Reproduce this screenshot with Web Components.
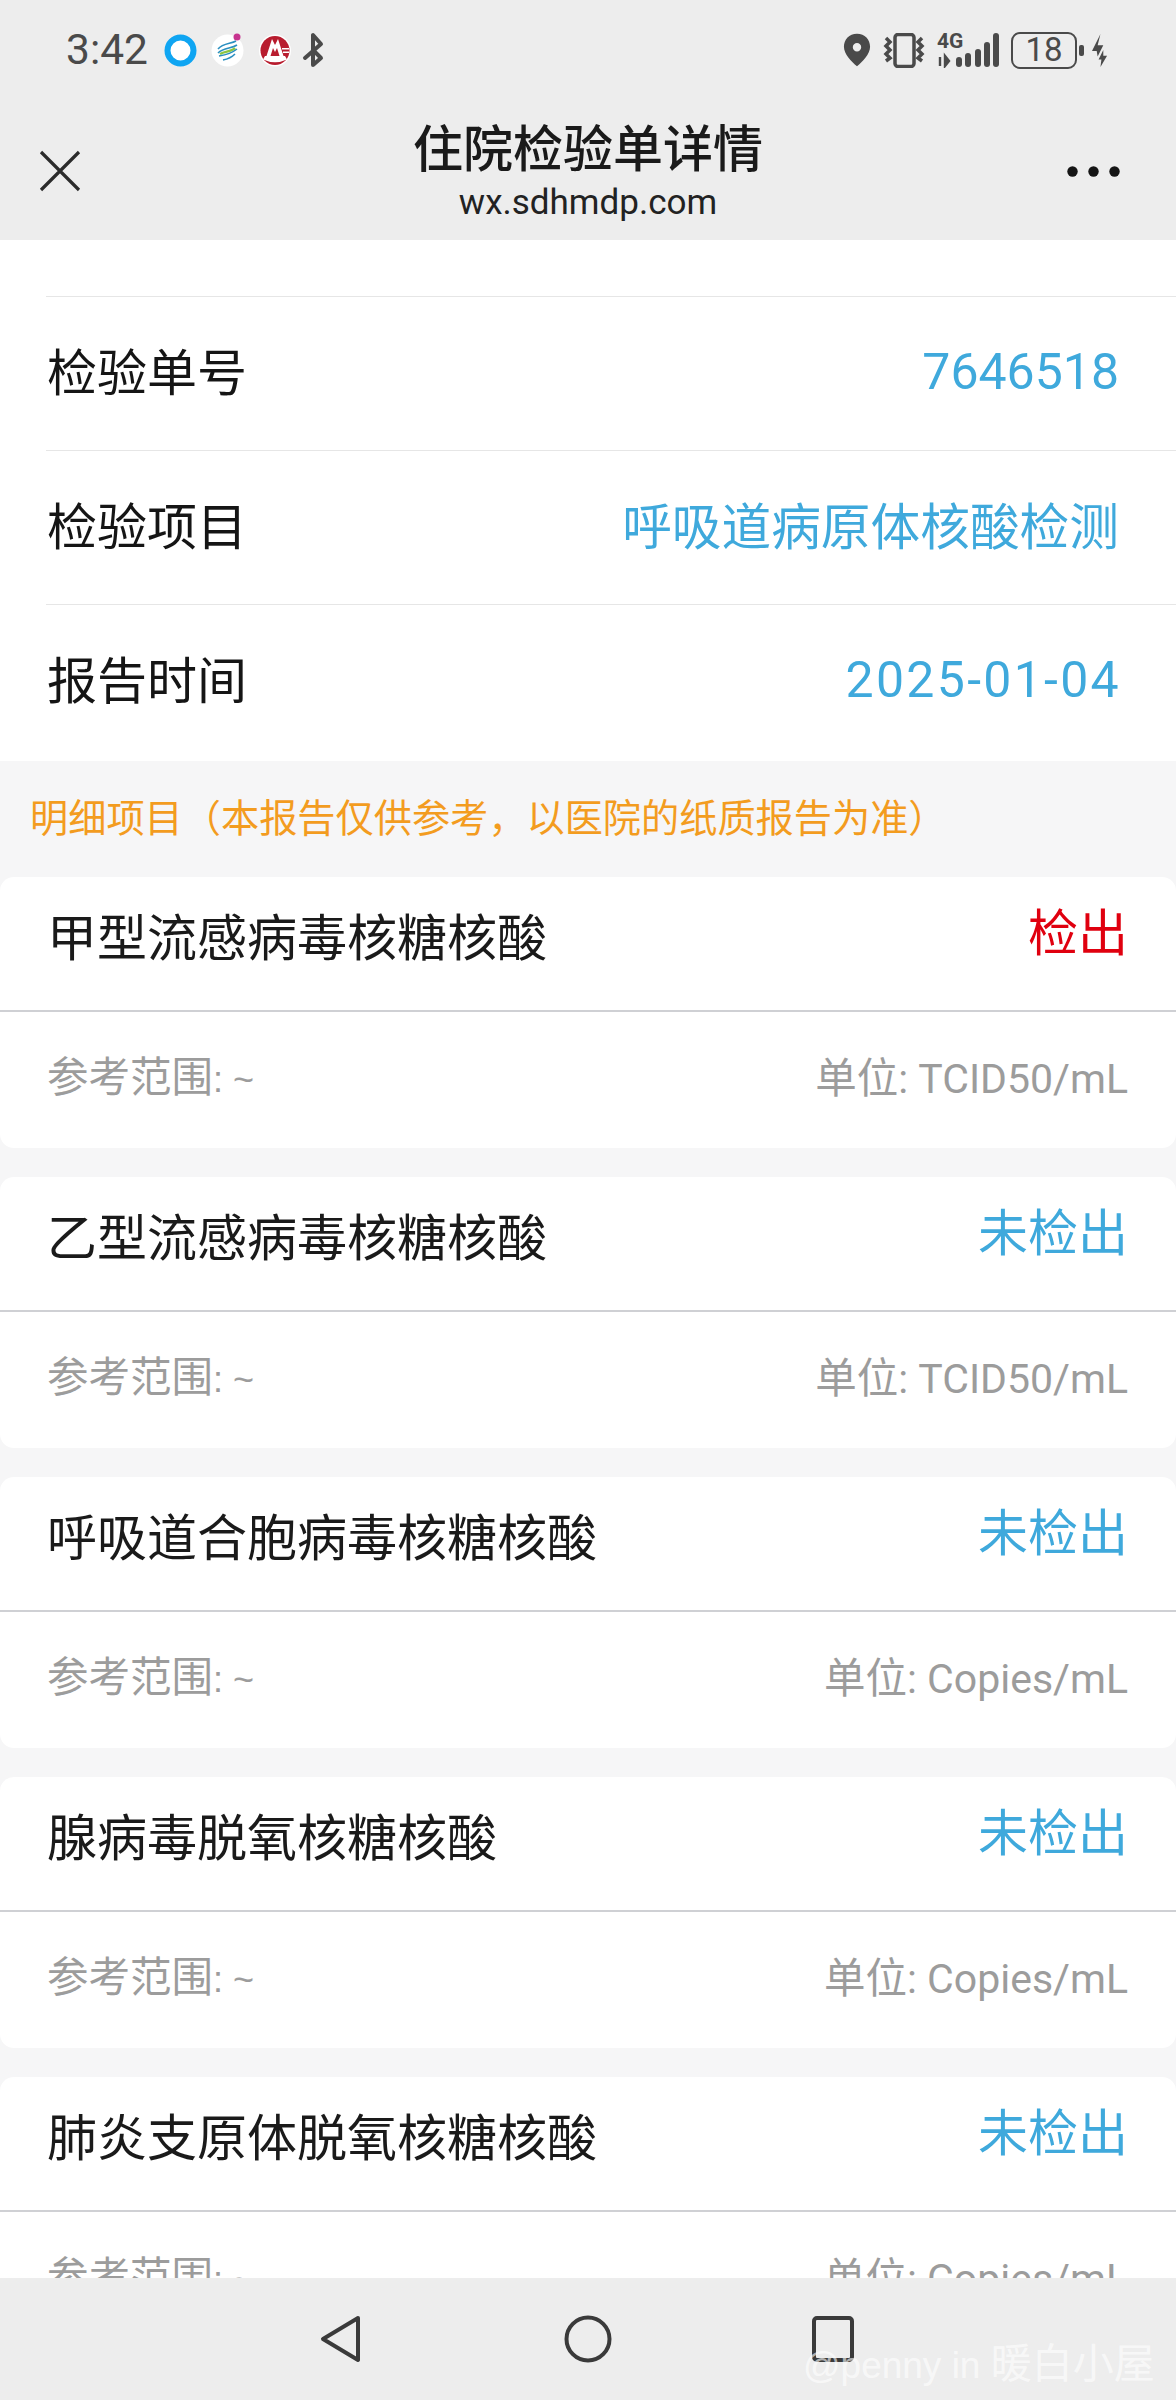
<!DOCTYPE html>
<html lang="zh">
<head>
<meta charset="utf-8">
<title>住院检验单详情</title>
<style>
  html, body { margin: 0; padding: 0; background: #f6f6f7; }
  body { font-family: "Roboto", "Noto Sans CJK SC", sans-serif; }
</style>
</head>
<body>
<report-app>
  <phone-header slot="header"></phone-header>
  <info-list>
    <info-row label="检验单号" value="7646518" big></info-row>
    <info-row label="检验项目" value="呼吸道病原体核酸检测"></info-row>
    <info-row label="报告时间" value="2025-01-04" big wide></info-row>
  </info-list>
  <section-note>明细项目（本报告仅供参考，以医院的纸质报告为准）</section-note>
  <result-card name="甲型流感病毒核糖核酸" result="检出" positive unit="TCID50/mL"></result-card>
  <result-card name="乙型流感病毒核糖核酸" result="未检出" unit="TCID50/mL"></result-card>
  <result-card name="呼吸道合胞病毒核糖核酸" result="未检出" unit="Copies/mL"></result-card>
  <result-card name="腺病毒脱氧核糖核酸" result="未检出" unit="Copies/mL"></result-card>
  <result-card name="肺炎支原体脱氧核糖核酸" result="未检出" unit="Copies/mL"></result-card>
  <nav-bar slot="footer"></nav-bar>
</report-app>

<script>
const $appTpl = document.createElement("template");
$appTpl.innerHTML = `
  <style>
    :host { display: flex; flex-direction: column; width: 1176px; height: 2400px; overflow: hidden; background: #f6f6f7; }
    #content { flex: 1; min-height: 0; overflow: hidden; }
  </style>
  <slot name="header"></slot>
  <div id="content"><slot></slot></div>
  <slot name="footer"></slot>
`;
class ReportApp extends HTMLElement {
  constructor() {
    super();
    this.attachShadow({ mode: "open" });
    this.shadowRoot.appendChild($appTpl.content.cloneNode(true));
  }
}
customElements.define("report-app", ReportApp);

const $headerTpl = document.createElement("template");
$headerTpl.innerHTML = `
  <style>
    :host { display: flex; flex-direction: column; height: 240px; background: #ededed; flex: none; }
    #status { display: flex; align-items: center; justify-content: space-between; height: 50px; margin-top: 25px; padding: 0 68px 0 66px; }
    #left, #right { display: flex; align-items: center; }
    #time { font: 400 42.5px/50px "Roboto", sans-serif; color: #4a4a4a; margin-right: 16px; }
    svg { display: block; flex: none; }
    #signal { position: relative; width: 62px; height: 35px; margin-right: 12px; }
    #g4 { position: absolute; left: 0; top: -2px; font: 700 21px/20px "Roboto", sans-serif; color: #4a4a4a; }
    #battery { box-sizing: border-box; width: 66px; height: 37px; border: 2.5px solid #4a4a4a; border-radius: 9px; font: 400 33px/32px "Roboto", sans-serif; color: #4a4a4a; text-align: center; }
    #nub { width: 5px; height: 11px; border-radius: 2px; background: #4a4a4a; margin: 0 8px 0 2px; }
    #nav { flex: 1; display: grid; grid-template-columns: 1fr auto 1fr; align-items: center; padding: 27px 39px 0; }
    #close { justify-self: start; }
    #more { justify-self: end; margin-right: 17px; }
    #titles { display: flex; flex-direction: column; align-items: center; }
    #title { font: 500 50px/60px "Noto Sans CJK SC", sans-serif; color: #1a1a1a; margin-top: -4px; }
    #host { font: 400 35px/42px "Roboto", sans-serif; color: #222; margin-top: 7px; }
  </style>
  <div id="status">
    <div id="left">
      <span id="time">3:42</span>
      <svg width="33" height="33" viewBox="0 0 33 33" style="margin-right:14px"><circle cx="16.5" cy="16.5" r="13" fill="#fff" stroke="#0fa5f2" stroke-width="6"/></svg>
      <svg width="33" height="35" viewBox="0 0 33 35" style="margin-right:15px"><circle cx="16.5" cy="17.5" r="16" fill="#fff"/><path d="M7 16c5-6 13-5 18-8M7 20c6-6 13-4 19-8" stroke="#2a8fc0" stroke-width="1.6" fill="none"/><path d="M9 21c5-3 11-2 15-6" stroke="#8cc63f" stroke-width="2.4" fill="none"/><path d="M8 23c6-1 13-3 18-7M12 27c5-1 9-3 12-6" stroke="#2a8fc0" stroke-width="1.6" fill="none"/><circle cx="26" cy="4" r="3.5" fill="#c7348f"/></svg>
      <svg width="32" height="33" viewBox="0 0 32 33" style="margin-right:11px"><circle cx="16" cy="16.5" r="16" fill="#fff"/><circle cx="16" cy="16.5" r="14.500" fill="#b81c2e"/><path d="M4 25.500Q16 31 28 25.500L26 22H24.500L19 5 16 11 13 5 7.500 22H6z" fill="#fff"/><path d="M11.500 22l2.500-8 2 4 2-4 2.500 8z" fill="#b81c2e"/><path d="M23 14h7v1.500h-7zM24 17.500h6V19h-6z" fill="#fff"/></svg>
      <svg width="22" height="36" viewBox="0 0 22 36"><path d="M3 26 19 12 11 3v30l8-7-8-8" fill="none" stroke="#4a4a4a" stroke-width="4" stroke-linejoin="round" stroke-linecap="round"/></svg>
    </div>
    <div id="right">
      <svg width="28" height="34" viewBox="0 0 30 35" style="margin-right:12px"><path fill-rule="evenodd" d="M15 0C6.500 0 1 6.300 1 14c0 8 8 16 14 21 6-5 14-13 14-21C29 6.300 23.500 0 15 0zm0 10a4.500 4.500 0 1 1 0 9 4.500 4.500 0 0 1 0-9z" fill="#4a4a4a"/></svg>
      <svg width="42" height="35" viewBox="0 0 42 35" style="margin-right:12px"><rect x="12" y="1.500" width="19" height="32" rx="3" fill="none" stroke="#4a4a4a" stroke-width="3.500"/><path d="M3 5l4 4-4 4 4 4-4 4 4 4-4 3M39 5l-4 4 4 4-4 4 4 4-4 4 4 3" fill="none" stroke="#4a4a4a" stroke-width="3.500"/></svg>
      <div id="signal">
        <svg width="62" height="35" viewBox="0 0 62 35"><path d="M3 24v9M8 23v10l4-5z" stroke="#4a4a4a" stroke-width="2.400" fill="#4a4a4a"/><g fill="#4a4a4a"><rect x="19" y="24" width="6" height="10" rx="3"/><rect x="28" y="20" width="6" height="14" rx="3"/><rect x="38" y="16" width="6" height="18" rx="3"/><rect x="47" y="9" width="6" height="25" rx="3"/><rect x="56" y="0" width="6" height="34" rx="3"/></g></svg>
        <span id="g4">4G</span>
      </div>
      <div id="battery">18</div>
      <div id="nub"></div>
      <svg width="16" height="35" viewBox="0 0 17 35"><path d="M9 0 0 18h5l1 6 6-12H6zM12 17 7 27h3l-1 8 7-12h-4z" fill="#4a4a4a"/></svg>
    </div>
  </div>
  <div id="nav">
    <svg id="close" width="42" height="42" viewBox="0 0 42 42"><path d="M2 2l38 38M40 2 2 40" stroke="#2b2b2b" stroke-width="3.200"/></svg>
    <div id="titles"><div id="title">住院检验单详情</div><div id="host">wx.sdhmdp.com</div></div>
    <svg id="more" width="53" height="11" viewBox="0 0 53 11"><circle cx="5.500" cy="5.500" r="5.200" fill="#151515"/><circle cx="26.500" cy="5.500" r="5.200" fill="#151515"/><circle cx="47.500" cy="5.500" r="5.200" fill="#151515"/></svg>
  </div>
`;
class PhoneHeader extends HTMLElement {
  constructor() {
    super();
    this.attachShadow({ mode: "open" });
    this.shadowRoot.appendChild($headerTpl.content.cloneNode(true));
  }
}
customElements.define("phone-header", PhoneHeader);

const $listTpl = document.createElement("template");
$listTpl.innerHTML = `
  <style>
    :host { display: block; background: #fff; padding-top: 56px; padding-left: 46px; }
  </style>
  <slot></slot>
`;
class InfoList extends HTMLElement {
  constructor() {
    super();
    this.attachShadow({ mode: "open" });
    this.shadowRoot.appendChild($listTpl.content.cloneNode(true));
  }
}
customElements.define("info-list", InfoList);

const $rowTpl = document.createElement("template");
$rowTpl.innerHTML = `
  <style>
    :host { display: flex; align-items: center; justify-content: space-between; height: 154px; box-sizing: border-box; border-top: 1.500px solid #e6e6e6; padding: 0 57px 9px 1px; }
    :host(:last-child) { height: 157px; padding-bottom: 12px; }
    #label { font: 400 50px/60px "Noto Sans CJK SC", sans-serif; color: #151515; }
    #value { font: 400 49.7px/60px "Noto Sans CJK SC", sans-serif; color: #3fa9dc; }
    :host([big]) #value { font: 400 50px/60px "Roboto", sans-serif; margin-top: 5px; }
    :host([wide]) #value { letter-spacing: 2.3px; margin-right: -2px; }
  </style>
  <span id="label"></span><span id="value"></span>
`;
class InfoRow extends HTMLElement {
  constructor() {
    super();
    this.attachShadow({ mode: "open" });
    this.shadowRoot.appendChild($rowTpl.content.cloneNode(true));
    this.shadowRoot.getElementById("label").textContent = this.getAttribute("label");
    this.shadowRoot.getElementById("value").textContent = this.getAttribute("value");
  }
}
customElements.define("info-row", InfoRow);

const $noteTpl = document.createElement("template");
$noteTpl.innerHTML = `
  <style>
    :host { display: block; height: 116px; box-sizing: border-box; padding: 30px 0 0 30px; font: 400 38.2px/50px "Noto Sans CJK SC", sans-serif; color: #f39c1f; white-space: nowrap; }
  </style>
  <slot></slot>
`;
class SectionNote extends HTMLElement {
  constructor() {
    super();
    this.attachShadow({ mode: "open" });
    this.shadowRoot.appendChild($noteTpl.content.cloneNode(true));
  }
}
customElements.define("section-note", SectionNote);

const $cardTpl = document.createElement("template");
$cardTpl.innerHTML = `
  <style>
    :host { display: block; background: #fff; border-radius: 14px; margin-bottom: 29px; height: 271px; overflow: hidden; }
    #top { display: flex; align-items: center; justify-content: space-between; height: 135px; box-sizing: border-box; padding: 0 48px 20px 47px; border-bottom: 2px solid #cfd0d4; }
    #name { font: 400 50px/60px "Noto Sans CJK SC", sans-serif; color: #1a1a1a; }
    #result { font: 400 50px/60px "Noto Sans CJK SC", sans-serif; color: #3fa9dc; margin-bottom: 9px; }
    :host([positive]) #result { color: #e0000f; }
    #bottom { display: flex; align-items: center; justify-content: space-between; height: 130px; padding: 0 48px 0 47px; font: 400 41.5px/50px "Noto Sans CJK SC", sans-serif; color: #9c9c9c; }
    .en { font-family: "Roboto", sans-serif; font-size: 41px; }
    .range { font: 400 36px/50px "Liberation Sans", sans-serif; }
  </style>
  <div id="top"><span id="name"></span><span id="result"></span></div>
  <div id="bottom"><span>参考范围<span class="range">: ~</span></span><span>单位<span class="en">: <span id="unit"></span></span></span></div>
`;
class ResultCard extends HTMLElement {
  constructor() {
    super();
    this.attachShadow({ mode: "open" });
    this.shadowRoot.appendChild($cardTpl.content.cloneNode(true));
    this.shadowRoot.getElementById("name").textContent = this.getAttribute("name");
    this.shadowRoot.getElementById("result").textContent = this.getAttribute("result");
    this.shadowRoot.getElementById("unit").textContent = this.getAttribute("unit");
  }
}
customElements.define("result-card", ResultCard);

const $navTpl = document.createElement("template");
$navTpl.innerHTML = `
  <style>
    :host { display: block; position: relative; flex: none; height: 122px; background: #ededed; }
    #icons { display: flex; align-items: center; justify-content: center; gap: 203px; height: 100%; }
    svg { display: block; }
    #square { margin: 0 3px 0 -3px; }
    #mark { position: absolute; left: 803px; top: 57px; font: 400 37px/50px "Liberation Sans", "Noto Sans CJK SC", sans-serif; color: rgba(255,255,255,.62); white-space: nowrap; }
    #mark span { font: 400 41px/50px "Noto Sans CJK SC", sans-serif; }
  </style>
  <div id="icons">
    <svg width="42" height="48" viewBox="0 0 42 48"><path d="M39 3 4 24l35 21z" fill="none" stroke="#3a3a3a" stroke-width="4" stroke-linejoin="round"/></svg>
    <svg width="48" height="48" viewBox="0 0 48 48"><circle cx="24" cy="24" r="21.500" fill="none" stroke="#3a3a3a" stroke-width="4"/></svg>
    <svg id="square" width="42" height="46" viewBox="0 0 42 46"><rect x="2" y="2" width="38" height="42" rx="3" fill="none" stroke="#3a3a3a" stroke-width="4"/></svg>
  </div>
  <div id="mark">@penny in <span>暖白小屋</span></div>
`;
class NavBar extends HTMLElement {
  constructor() {
    super();
    this.attachShadow({ mode: "open" });
    this.shadowRoot.appendChild($navTpl.content.cloneNode(true));
  }
}
customElements.define("nav-bar", NavBar);
</script>
</body>
</html>
